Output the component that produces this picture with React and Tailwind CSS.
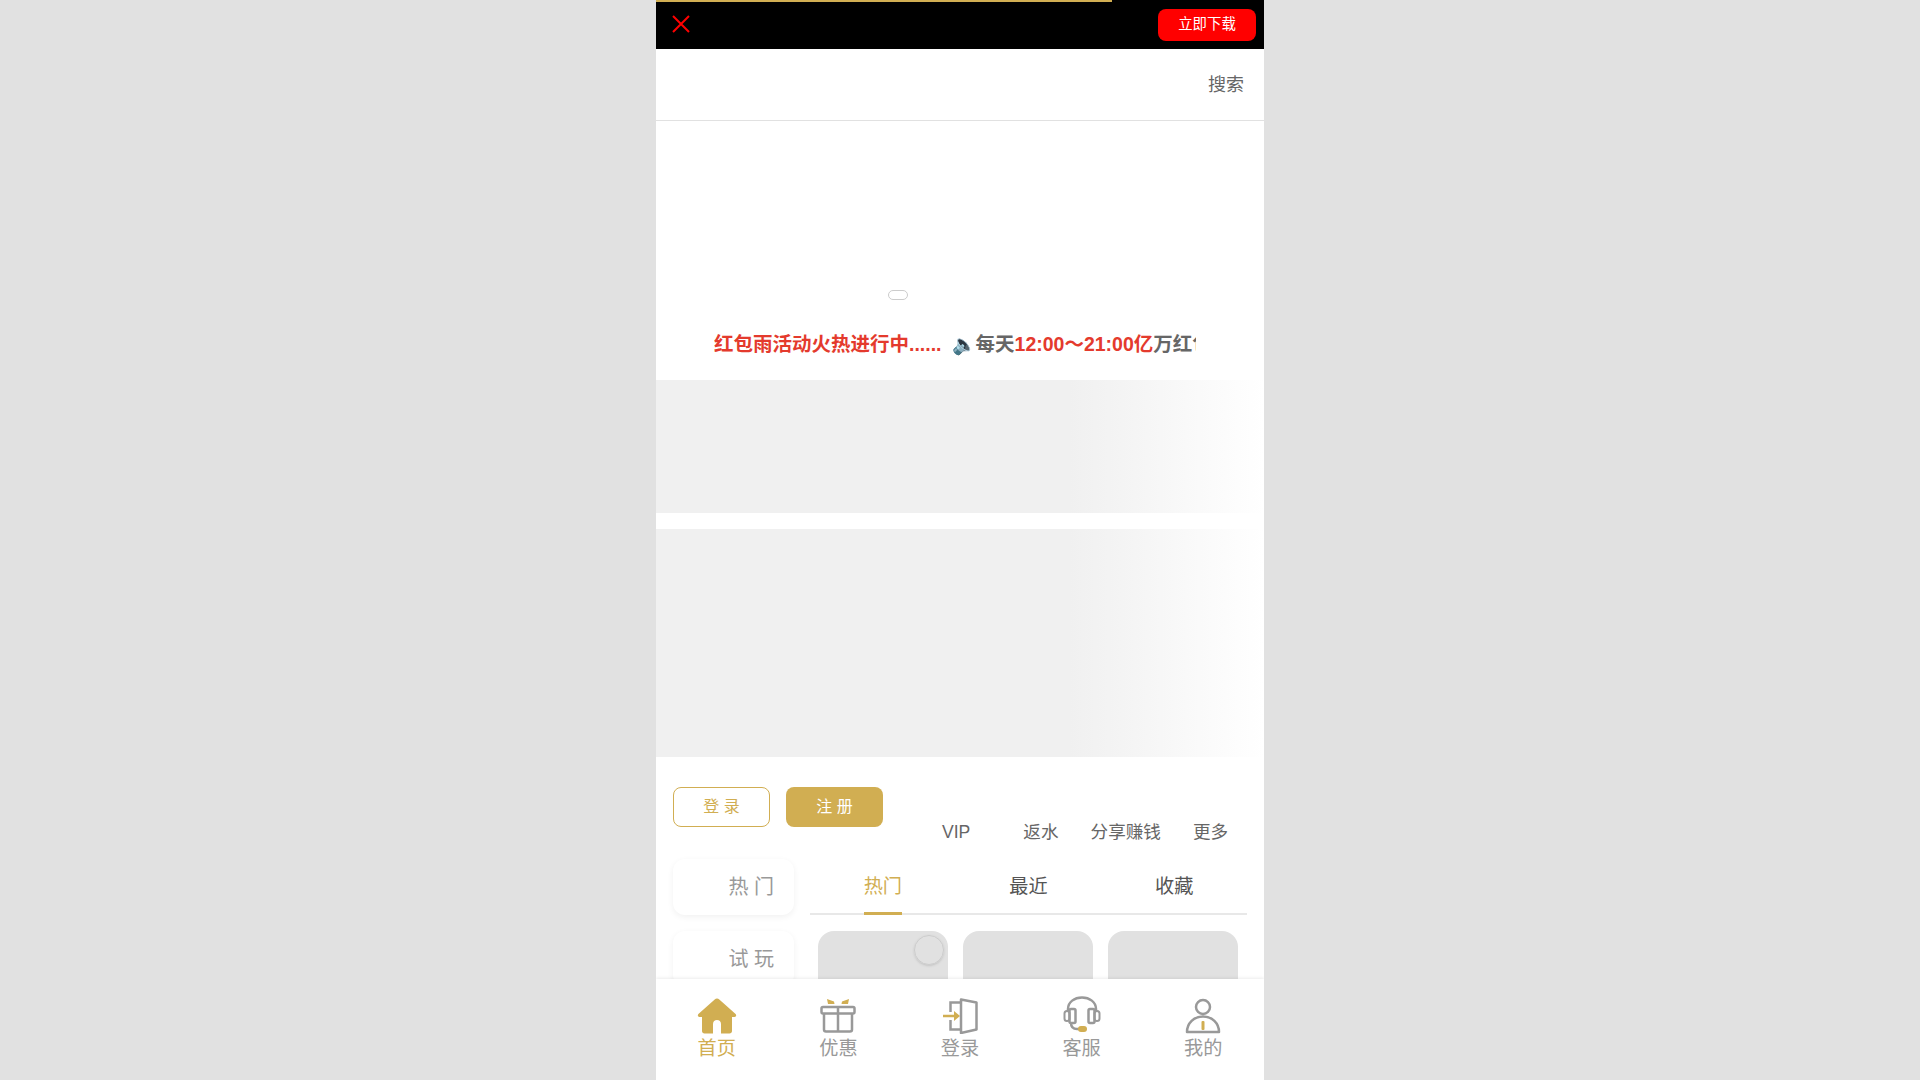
import React from 'react';

const GOLD = '#d1ae52';
const GREY = '#999999';

const HomeIcon = () => (
  <svg width="40" height="36" viewBox="0 0 40 36">
    <path d="M20 0.500c.9 0 1.600.4 2.300 1L38.600 16c1.200 1.200.5 3-1.100 3H35v14c0 1.500-1 2.500-2.500 2.500h-25C6 35.500 5 34.500 5 33V19H2.500C.9 19 .2 17.200 1.400 16L17.700 1.500c.7-.6 1.400-1 2.300-1z" fill={GOLD} />
    <path d="M16 36V26c0-2.500 1.700-4 4-4s4 1.500 4 4v10z" fill="#fff" />
  </svg>
);

const GiftIcon = () => (
  <svg width="36" height="36" viewBox="0 0 36 36" fill="none">
    <path d="M7 1l7 2.500.5 2.500H8z M29 1l-7 2.500-.5 2.500H28z" fill={GOLD} />
    <rect x="1.500" y="9" width="33" height="6.500" rx="1.500" stroke={GREY} strokeWidth="2.500" />
    <path d="M4 15.500V31.500c0 1.200.8 2 2 2h24c1.200 0 2-.8 2-2V15.500M18 9v24.500" stroke={GREY} strokeWidth="2.500" />
  </svg>
);

const LoginIcon = () => (
  <svg width="36" height="36" viewBox="0 0 36 36" fill="none">
    <path d="M18 4.500H8.500V14M8.500 22v9.500H18" stroke={GREY} strokeWidth="2.500" />
    <path d="M19 1.500l15.500 3v27L19 35z" stroke={GREY} strokeWidth="2.500" strokeLinejoin="round" />
    <path d="M1 18h13" stroke={GOLD} strokeWidth="2.500" />
    <path d="M12 13l6 5-6 5z" fill={GOLD} />
  </svg>
);

const HeadsetIcon = () => (
  <svg width="38" height="38" viewBox="0 0 38 38" fill="none">
    <path d="M5 15v-2C5 6 11.500 1.500 19 1.500S33 6 33 13v2" stroke={GREY} strokeWidth="2.500" />
    <rect x="1.500" y="15" width="5" height="10" rx="2.500" stroke={GREY} strokeWidth="2" />
    <rect x="6.500" y="13" width="6" height="14" rx="1.500" stroke={GREY} strokeWidth="2.500" />
    <rect x="25.500" y="13" width="6" height="14" rx="1.500" stroke={GREY} strokeWidth="2.500" />
    <rect x="31.500" y="15" width="5" height="10" rx="2.500" stroke={GREY} strokeWidth="2" />
    <path d="M8 27c0 4 2.500 6 6 6h4" stroke={GREY} strokeWidth="2.500" />
    <rect x="15" y="30" width="9" height="6" rx="3" fill={GOLD} />
  </svg>
);

const UserIcon = () => (
  <svg width="36" height="36" viewBox="0 0 36 36" fill="none">
    <circle cx="18" cy="9" r="7" stroke={GREY} strokeWidth="2.500" />
    <path d="M2 34c0-9 7-15.500 16-15.500S34 25 34 34z" stroke={GREY} strokeWidth="2.500" strokeLinejoin="round" />
    <rect x="16.500" y="23" width="3" height="9" rx="1" fill={GOLD} />
  </svg>
);

const tabs = [
  { label: '首页', icon: <HomeIcon />, active: true },
  { label: '优惠', icon: <GiftIcon /> },
  { label: '登录', icon: <LoginIcon /> },
  { label: '客服', icon: <HeadsetIcon /> },
  { label: '我的', icon: <UserIcon /> },
];

const App = () => {
  return (
    <div className="h-screen bg-[#e1e1e1] flex justify-center overflow-hidden font-['Liberation_Sans','Noto_Sans_CJK_SC',sans-serif]">
      <div className="relative w-[608px] h-full bg-white overflow-hidden">
        {/* Download bar */}
        <div className="relative h-[49px] bg-black flex items-center justify-between pl-[15px] pr-2">
          <div className="absolute left-0 top-0 h-0.5 w-[456px] bg-[#d1ae52]" />
          <svg width="20" height="20" viewBox="0 0 20 20" fill="none" className="-mt-px">
            <path d="M2 2l16 16M18 2L2 18" stroke="#ff0000" strokeWidth="2" />
          </svg>
          <button className="w-[98px] h-8 rounded-lg bg-[#ff0000] text-white text-[14.4px]">立即下载</button>
        </div>

        {/* Header */}
        <div className="h-[72px] border-b border-[#e1e1e1] flex items-center justify-end pr-5 text-lg text-[#666666]">
          搜索
        </div>

        {/* Banner */}
        <div className="h-[179px] flex items-end justify-center pr-[125px]">
          <div className="w-5 h-2.5 rounded-full border border-[#cccccc]" />
        </div>

        {/* Notice */}
        <div className="h-[80px] pl-[58px] pr-[68px] pt-[29px]">
          <div className="overflow-hidden whitespace-nowrap text-[19.5px] font-bold text-[#666666] leading-[30px]">
            <span className="text-[#e43a2d]">红包雨活动火热进行中......</span>
            <span className="ml-[10px]">🔈</span>
            <span>每天</span>
            <span className="text-[#e43a2d]">12:00～21:00亿</span>
            <span>万红包等你来抢</span>
          </div>
        </div>

        {/* Loading blocks */}
        <div className="h-[133px] bg-gradient-to-r from-[#f0f0f0] from-[68%] to-white" />
        <div className="h-[228px] mt-4 bg-gradient-to-r from-[#f0f0f0] from-[68%] to-white" />

        {/* Buttons and shortcuts */}
        <div className="flex mt-[30px] pl-[17px]">
          <button className="w-[97px] h-10 rounded-lg border border-[#d1ae52] text-[#d1ae52] text-base">登 录</button>
          <button className="w-[97px] h-10 ml-4 rounded-lg bg-[#d1ae52] text-white text-base">注 册</button>
          <div className="flex-1 flex items-center mt-[25px] h-10 text-[#666666] text-[17.6px]">
            <span className="ml-[59px]">VIP</span>
            <span className="ml-[53px]">返水</span>
            <span className="ml-[32px]">分享赚钱</span>
            <span className="ml-[32px]">更多</span>
          </div>
        </div>

        {/* Games */}
        <div className="flex mt-[7px] px-[17px]">
          <div className="w-[121px] shrink-0 flex flex-col gap-4">
            <div className="h-14 rounded-xl bg-white shadow-[0_2px_6px_rgba(0,0,0,0.06)] flex items-center justify-end pr-5 text-[20px] text-[#999999]">
              热 门
            </div>
            <div className="h-14 rounded-xl bg-white shadow-[0_2px_6px_rgba(0,0,0,0.06)] flex items-center justify-end pr-5 text-[20px] text-[#999999]">
              试 玩
            </div>
          </div>
          <div className="flex-1 ml-4">
            <div className="h-14 border-b-2 border-[#e8e8e8] grid grid-cols-3 text-[19.2px] text-[#555555]">
              <div className="flex items-center justify-center pt-0.5">
                <span className="relative h-full flex items-center text-[#d1ae52]">
                  热门
                  <span className="absolute left-0 right-0 -bottom-0.5 h-[3px] bg-[#d1ae52]" />
                </span>
              </div>
              <div className="flex items-center justify-center pt-0.5">最近</div>
              <div className="flex items-center justify-center pt-0.5">收藏</div>
            </div>
            <div className="flex gap-[15px] mt-4 pl-2">
              <div className="relative w-[130px] h-[130px] rounded-2xl bg-[#e1e1e1]">
                <div className="absolute top-1 right-1 w-[30px] h-[30px] rounded-full border border-[#cccccc] shadow-sm" />
              </div>
              <div className="w-[130px] h-[130px] rounded-2xl bg-[#e1e1e1]" />
              <div className="w-[130px] h-[130px] rounded-2xl bg-[#e1e1e1]" />
            </div>
          </div>
        </div>

        {/* Bottom tab bar */}
        <div className="absolute left-0 right-0 bottom-0 h-[101px] bg-white shadow-[0_-1px_3px_rgba(0,0,0,0.08)] grid grid-cols-5 pt-[17px]">
          {tabs.map((tab) => (
            <div key={tab.label} className="flex flex-col items-center">
              <div className="h-[38px] flex items-end">{tab.icon}</div>
              <span className={`text-[19.2px] leading-6 mt-[3px] ${tab.active ? 'text-[#d1ae52]' : 'text-[#999999]'}`}>{tab.label}</span>
            </div>
          ))}
        </div>
      </div>
    </div>
  );
};

export default App;
